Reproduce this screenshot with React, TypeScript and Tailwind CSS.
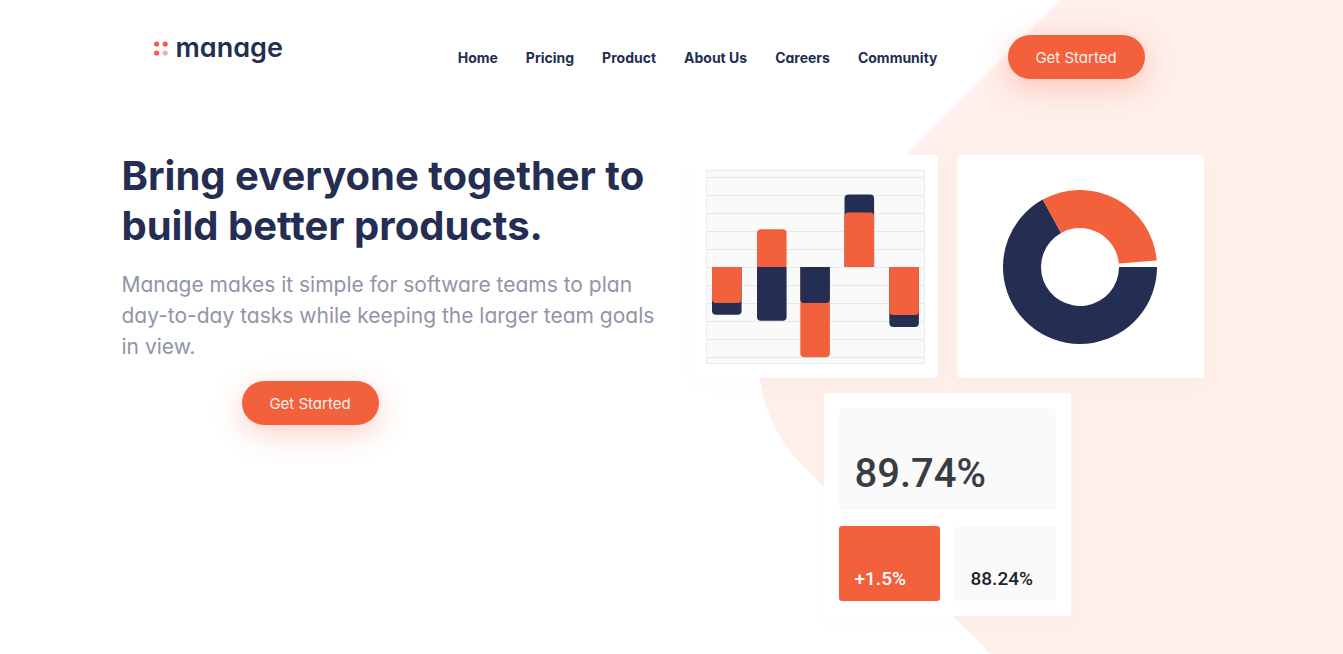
import React from "react";

const links = ["Home", "Pricing", "Product", "About Us", "Careers", "Community"];

const gridLines = [7, 25, 43, 61, 79, 97, 115, 133, 151, 169, 187];

const NAVY = "#242d52";
const ORANGE = "#f3603c";

function Logo() {
  return (
    <a href="#" aria-label="manage" className="flex items-center gap-2">
      <svg width="14" height="15" viewBox="0 0 14 15" aria-hidden="true">
        <circle cx="2.6" cy="3" r="2.6" fill={ORANGE} />
        <circle cx="11.2" cy="3" r="2.6" fill={ORANGE} />
        <circle cx="2.6" cy="12" r="2.6" fill={ORANGE} />
        <circle cx="11.2" cy="12" r="2.6" fill="#f9b09e" />
      </svg>
      <span className="text-[27px] leading-8 font-semibold">manage</span>
    </a>
  );
}

function CtaButton() {
  return (
    <button
      type="button"
      className="h-11 w-[137px] rounded-full bg-[#f3603c] pt-0.5 text-[15px] text-[#fff0ec] shadow-[0_8px_30px_rgba(243,96,60,0.3)]"
    >
      Get Started
    </button>
  );
}

function Card({ children }: { children: React.ReactNode }) {
  return (
    <div className="h-[223px] w-[247px] rounded-[4px] bg-white p-[15px] shadow-[0_8px_24px_rgba(0,0,0,0.015)]">
      {children}
    </div>
  );
}

/** Draws a bar growing from the zero line (y = 97) to `end`, rounded at its far end. */
function Bar({ x, end, fill }: { x: number; end: number; fill: string }) {
  const r = end > 97 ? -4 : 4;
  const sweep = end > 97 ? 0 : 1;
  return (
    <path
      d={`M${x} 97V${end + r}a4 4 0 0 ${sweep} 4 ${-r}h21.6a4 4 0 0 ${sweep} 4 ${r}V97z`}
      fill={fill}
    />
  );
}

function BarChart() {
  return (
    <svg width="219" height="194" viewBox="0 0 219 194" role="img" aria-label="Bar chart">
      <rect x="0.5" y="0.5" width="218" height="193" fill="#fafafa" stroke="#e7ebeb" />
      {gridLines.map((y) => (
        <rect key={y} x="1" y={y} width="217" height="1" fill="#e5e8e8" />
      ))}
      <Bar x={6} end={144.8} fill={NAVY} />
      <Bar x={6} end={133} fill={ORANGE} />
      <Bar x={51} end={59.2} fill={ORANGE} />
      <Bar x={51} end={150.8} fill={NAVY} />
      <Bar x={94.3} end={187.2} fill={ORANGE} />
      <Bar x={94.3} end={133} fill={NAVY} />
      <Bar x={138.5} end={24.4} fill={NAVY} />
      <Bar x={138.5} end={42.4} fill={ORANGE} />
      <Bar x={183.3} end={157} fill={NAVY} />
      <Bar x={183.3} end={145} fill={ORANGE} />
    </svg>
  );
}

function Donut() {
  return (
    <svg width="154" height="154" viewBox="-77 -77 154 154" role="img" aria-label="Donut chart">
      <path d="M77 0A77 77 0 1 1 -37.3 -67.4L-18.9 -34.1A39 39 0 1 0 39 0Z" fill={NAVY} />
      <path d="M-37.3 -67.4A77 77 0 0 1 76.7 -6.6L38.8 -3.4A39 39 0 0 0 -18.9 -34.1Z" fill={ORANGE} />
    </svg>
  );
}

export default function App() {
  return (
    <div className="relative min-h-screen overflow-hidden bg-white font-['Inter','Liberation_Sans',sans-serif] text-[#242d52] [font-feature-settings:'cv11']">
      <svg
        className="absolute top-0 left-1/2 ml-[27px]"
        width="1300"
        height="1026"
        viewBox="699 0 1300 1026"
        aria-hidden="true"
      >
        <path
          d="M1361 -300L801.5 259.5A145 145 0 0 0 801.5 464.5L1363 1026H2000V-300Z"
          fill="#ffefeb"
        />
      </svg>

      <div className="relative mx-auto max-w-[1100px]">
        <header className="flex flex-wrap items-start gap-y-6 px-8 pt-[35px] lg:pr-[77px]">
          <div className="-mt-[3px]">
            <Logo />
          </div>
          <nav className="mr-[70px] ml-auto pt-[13px]">
            <ul className="flex flex-wrap gap-7 text-sm font-bold">
              {links.map((label) => (
                <li key={label}>
                  <a href="#">{label}</a>
                </li>
              ))}
            </ul>
          </nav>
          <CtaButton />
        </header>

        <main className="grid pt-[72px] pb-10 lg:grid-cols-2">
          <section>
            <h1 className="text-[40px] leading-[50px] font-bold">
              Bring everyone together to build better products.
            </h1>
            <p className="mt-[18px] text-[21px] leading-[31px] text-[#9095a7]">
              Manage makes it simple for software teams to plan day-to-day tasks while keeping the
              larger team goals in view.
            </p>
            <div className="mt-[19px] pl-[120px]">
              <CtaButton />
            </div>
          </section>

          <section className="flex flex-col items-center gap-[15px] pt-1 pl-px">
            <div className="flex gap-[19px]">
              <Card>
                <BarChart />
              </Card>
              <Card>
                <div className="flex h-full items-center justify-center">
                  <Donut />
                </div>
              </Card>
            </div>
            <Card>
              <div className="grid h-full grid-cols-2 grid-rows-[102px_1fr] gap-x-[15px] gap-y-4 font-['Roboto','Liberation_Sans',sans-serif] font-medium">
                <div className="col-span-2 flex items-end rounded-[3px] bg-[#fafafa] px-4 pb-3 text-[40px] leading-12 text-[#373d43]">
                  89.74%
                </div>
                <div className="flex items-end rounded-[3px] bg-[#f3603c] px-4 pb-3 text-[19px] leading-5 text-white">
                  +1.5%
                </div>
                <div className="flex items-end rounded-[3px] bg-[#fafafa] px-4 pb-3 text-[19px] leading-5 text-[#1d242b]">
                  88.24%
                </div>
              </div>
            </Card>
          </section>
        </main>
      </div>
    </div>
  );
}
